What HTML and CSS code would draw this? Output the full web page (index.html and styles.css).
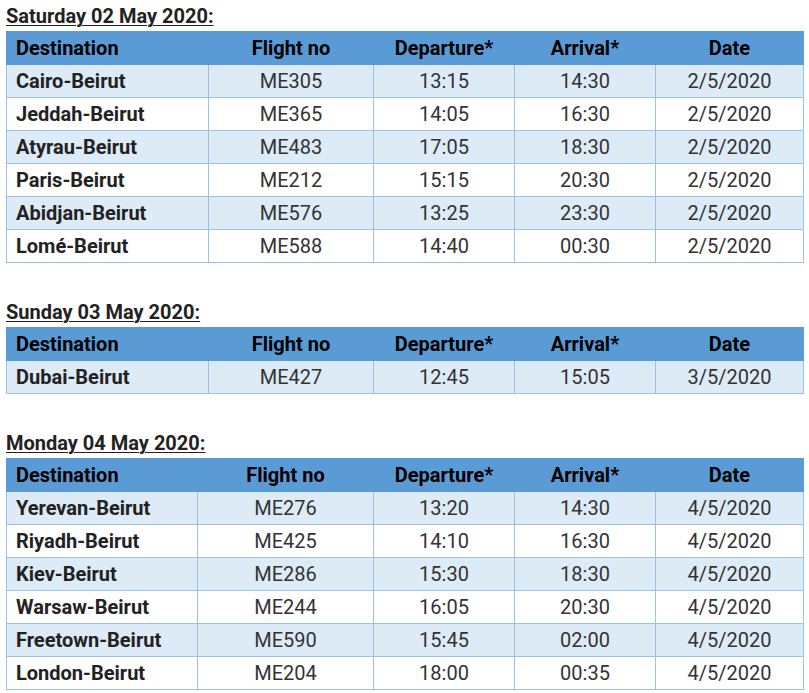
FILE: index.html
```html
<!DOCTYPE html>
<html lang="en">
<head>
<meta charset="utf-8">
<title>Flights</title>
<link rel="stylesheet" href="styles.css">
</head>
<body>
<section class="day">
  <p class="day-title">Saturday 02 May 2020:</p>
  <table class="flights">
    <colgroup><col class="c-dest"><col class="c-no"><col class="c-t"><col class="c-t"><col class="c-date"></colgroup>
    <thead><tr><th class="dest">Destination</th><th>Flight no</th><th>Departure*</th><th>Arrival*</th><th>Date</th></tr></thead>
    <tbody>
      <tr><td class="dest">Cairo-Beirut</td><td>ME305</td><td>13:15</td><td>14:30</td><td>2/5/2020</td></tr>
      <tr><td class="dest">Jeddah-Beirut</td><td>ME365</td><td>14:05</td><td>16:30</td><td>2/5/2020</td></tr>
      <tr><td class="dest">Atyrau-Beirut</td><td>ME483</td><td>17:05</td><td>18:30</td><td>2/5/2020</td></tr>
      <tr><td class="dest">Paris-Beirut</td><td>ME212</td><td>15:15</td><td>20:30</td><td>2/5/2020</td></tr>
      <tr><td class="dest">Abidjan-Beirut</td><td>ME576</td><td>13:25</td><td>23:30</td><td>2/5/2020</td></tr>
      <tr><td class="dest">Lomé-Beirut</td><td>ME588</td><td>14:40</td><td>00:30</td><td>2/5/2020</td></tr>
    </tbody>
  </table>
</section>
<section class="day">
  <p class="day-title">Sunday 03 May 2020:</p>
  <table class="flights">
    <colgroup><col class="c-dest"><col class="c-no"><col class="c-t"><col class="c-t"><col class="c-date"></colgroup>
    <thead><tr><th class="dest">Destination</th><th>Flight no</th><th>Departure*</th><th>Arrival*</th><th>Date</th></tr></thead>
    <tbody>
      <tr><td class="dest">Dubai-Beirut</td><td>ME427</td><td>12:45</td><td>15:05</td><td>3/5/2020</td></tr>
    </tbody>
  </table>
</section>
<section class="day">
  <p class="day-title">Monday 04 May 2020:</p>
  <table class="flights">
    <colgroup><col class="c-dest-n"><col class="c-no-w"><col class="c-t"><col class="c-t"><col class="c-date"></colgroup>
    <thead><tr><th class="dest">Destination</th><th>Flight no</th><th>Departure*</th><th>Arrival*</th><th>Date</th></tr></thead>
    <tbody>
      <tr><td class="dest">Yerevan-Beirut</td><td>ME276</td><td>13:20</td><td>14:30</td><td>4/5/2020</td></tr>
      <tr><td class="dest">Riyadh-Beirut</td><td>ME425</td><td>14:10</td><td>16:30</td><td>4/5/2020</td></tr>
      <tr><td class="dest">Kiev-Beirut</td><td>ME286</td><td>15:30</td><td>18:30</td><td>4/5/2020</td></tr>
      <tr><td class="dest">Warsaw-Beirut</td><td>ME244</td><td>16:05</td><td>20:30</td><td>4/5/2020</td></tr>
      <tr><td class="dest">Freetown-Beirut</td><td>ME590</td><td>15:45</td><td>02:00</td><td>4/5/2020</td></tr>
      <tr><td class="dest">London-Beirut</td><td>ME204</td><td>18:00</td><td>00:35</td><td>4/5/2020</td></tr>
    </tbody>
  </table>
</section>
</body>
</html>
```

FILE: styles.css
```css
html, body {
  margin: 0;
  background: #fff;
}
body {
  padding: 3px 6px 0 6px;
  font-family: Roboto, "Liberation Sans", Arial, sans-serif;
  font-size: 20px;
  color: #333;
}
.day + .day {
  margin-top: 36px;
}
.day-title {
  margin: 0 0 2px 0;
  line-height: 26px;
  font-weight: 700;
  color: #222;
  text-decoration: underline;
  text-decoration-thickness: 1px;
  text-underline-offset: 2px;
}
.flights {
  width: 797px;
  border-collapse: collapse;
  table-layout: fixed;
}
.c-dest { width: 202px; }
.c-no { width: 165px; }
.c-dest-n { width: 191px; }
.c-no-w { width: 176px; }
.c-t { width: 141px; }
.c-date { width: 148px; }
.flights th,
.flights td {
  padding: 5px 9px;
  line-height: 22px;
  text-align: center;
  white-space: nowrap;
}
.flights th {
  background: #5b9bd5;
  color: #000;
  font-weight: 700;
  border: 1px solid #5b9bd5;
}
.flights td {
  border: 1px solid #9bc2e6;
  font-weight: 400;
}
.flights tbody tr:nth-child(odd) td {
  background: #ddebf7;
}
.flights .dest {
  text-align: left;
}
.flights td.dest {
  font-weight: 700;
  color: #222;
}
```
